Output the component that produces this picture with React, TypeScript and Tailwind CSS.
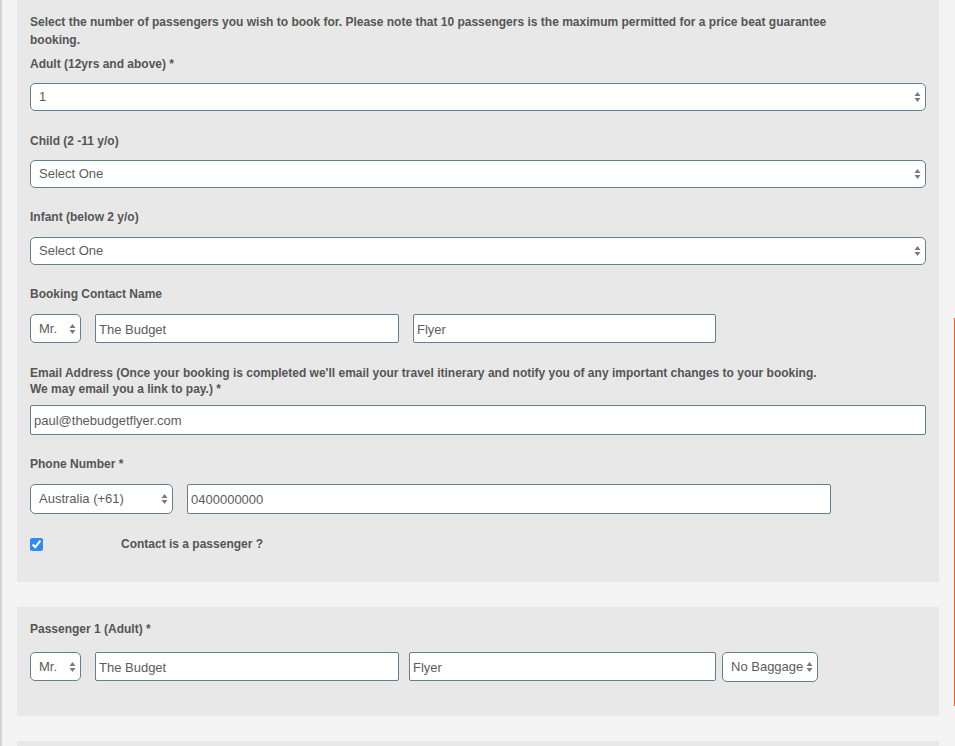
import type { ReactNode } from "react";

const FONT = "font-['Liberation_Sans',Arial,sans-serif]";
const LABEL = "text-[12px] font-bold text-[#555555]";

function Arrows() {
  return (
    <svg
      width="7"
      height="11"
      viewBox="0 0 7 11"
      className="pointer-events-none absolute right-[5px] top-1/2 -translate-y-1/2"
    >
      <path d="M3.5 0.5 L6.5 4.5 L0.5 4.5 Z" fill="#7a7a7a" />
      <path d="M3.5 10.5 L6.5 6.5 L0.5 6.5 Z" fill="#7a7a7a" />
    </svg>
  );
}

function Select({
  value,
  options,
  className,
}: {
  value: string;
  options: string[];
  className: string;
}) {
  return (
    <div className={`relative shrink-0 ${className}`}>
      <select
        defaultValue={value}
        className="h-full w-full appearance-none rounded-[5px] border border-[#62808f] bg-white pl-[8px] pr-[12px] text-[13px] text-[#5c5c5c] outline-none"
      >
        {options.map((o) => (
          <option key={o}>{o}</option>
        ))}
      </select>
      <Arrows />
    </div>
  );
}

function TextInput({ value, className }: { value: string; className: string }) {
  return (
    <input
      defaultValue={value}
      className={`shrink-0 rounded-[2px] border border-[#62808f] bg-white pt-px pl-[3px] text-[13px] text-[#5c5c5c] outline-none ${className}`}
    />
  );
}

function Panel({ children, className }: { children: ReactNode; className: string }) {
  return <div className={`bg-[#e8e8e8] px-[13px] ${className}`}>{children}</div>;
}

const COUNTS = ["Select One", "0", "1", "2", "3", "4", "5", "6", "7", "8", "9", "10"];
const TITLES = ["Mr.", "Mrs.", "Ms.", "Miss", "Dr."];

export default function App() {
  return (
    <div className={`flex min-h-[746px] bg-[#f4f4f4] ${FONT}`}>
      <div className="w-[2px] shrink-0 bg-[#d3d3d3]" />

      <div className="flex w-[937px] shrink-0 flex-col gap-[25px] pl-[15px]">
        {/* contact details */}
        <Panel className="pt-[13px] pb-[29px]">
          <p className={`${LABEL} w-[820px] leading-[18px]`}>
            Select the number of passengers you wish to book for. Please note that 10 passengers is
            the maximum permitted for a price beat guarantee booking.
          </p>

          <p className={`${LABEL} mt-[6px] leading-[18px]`}>Adult (12yrs and above) *</p>
          <Select value="1" options={COUNTS.slice(2)} className="mt-[10px] h-[28px] w-full" />

          <p className={`${LABEL} mt-[21px] leading-[18px]`}>Child (2 -11 y/o)</p>
          <Select value="Select One" options={COUNTS} className="mt-[10px] h-[28px] w-full" />

          <p className={`${LABEL} mt-[20px] leading-[18px]`}>Infant (below 2 y/o)</p>
          <Select value="Select One" options={COUNTS} className="mt-[11px] h-[28px] w-full" />

          <p className={`${LABEL} mt-[20px] leading-[18px]`}>Booking Contact Name</p>
          <div className="mt-[11px] flex h-[29px] gap-[14px]">
            <Select value="Mr." options={TITLES} className="h-full w-[51px]" />
            <TextInput value="The Budget" className="h-full w-[304px]" />
            <TextInput value="Flyer" className="h-full w-[303px]" />
          </div>

          <p className={`${LABEL} mt-[22px] leading-[16px]`}>
            Email Address (Once your booking is completed we'll email your travel itinerary and
            notify you of any important changes to your booking.
            <br />
            We may email you a link to pay.) *
          </p>
          <TextInput value="paul@thebudgetflyer.com" className="mt-[8px] h-[30px] w-full" />

          <p className={`${LABEL} mt-[20px] leading-[18px]`}>Phone Number *</p>
          <div className="mt-[11px] flex h-[30px] gap-[14px]">
            <Select
              value="Australia (+61)"
              options={["Australia (+61)", "New Zealand (+64)", "United Kingdom (+44)"]}
              className="h-full w-[143px]"
            />
            <TextInput value="0400000000" className="h-full w-[644px]" />
          </div>

          <label className="mt-[21px] flex h-[18px] items-center">
            <input
              type="checkbox"
              defaultChecked
              className="m-0 h-[13px] w-[13px] accent-[#2f8af5]"
            />
            <span className={`${LABEL} ml-[78px]`}>Contact is a passenger ?</span>
          </label>
        </Panel>

        {/* passenger rows */}
        <Panel className="pt-[13px] pb-[35px]">
          <p className={`${LABEL} leading-[18px]`}>Passenger 1 (Adult) *</p>
          <div className="mt-[14px] flex h-[29px] items-start">
            <Select value="Mr." options={TITLES} className="h-full w-[51px]" />
            <TextInput value="The Budget" className="ml-[14px] h-full w-[304px]" />
            <TextInput value="Flyer" className="ml-[10px] h-full w-[307px]" />
            <Select
              value="No Baggage"
              options={["No Baggage", "15kg", "20kg", "30kg"]}
              className="ml-[6px] h-[30px] w-[96px]"
            />
          </div>
        </Panel>

        <Panel className="h-[40px]">
          <div />
        </Panel>
      </div>

      {/* side rail */}
      <div className="w-[16px] shrink-0 pl-[15px] pt-[318px]">
        <div className="h-[388px] w-[2px] bg-[#f15a22]" />
      </div>
    </div>
  );
}
